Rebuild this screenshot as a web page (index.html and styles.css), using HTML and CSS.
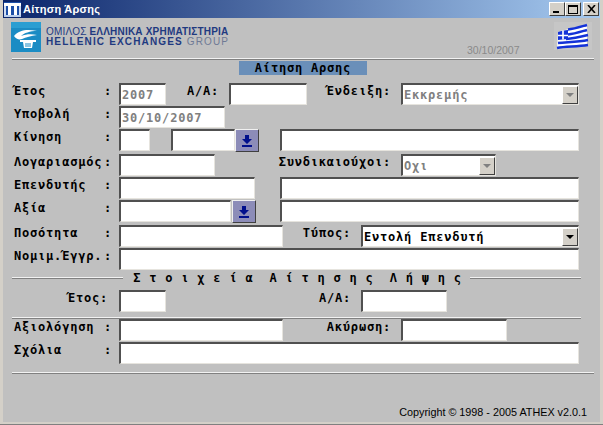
FILE: index.html
```html
<!DOCTYPE html>
<html lang="el">
<head>
  <meta charset="UTF-8">
  <title>Αίτηση Άρσης</title>
  <link rel="stylesheet" href="styles.css">
</head>
<body>
<div class="window">
  <div class="titlebar">
    <svg class="app-icon" width="17" height="15" viewBox="0 0 17 15">
      <rect width="17" height="15" fill="#1c4fa8"/>
      <rect x="0" y="1" width="17" height="3" fill="#fff"/>
      <rect x="0" y="4" width="2" height="9" fill="#cfdcf2"/>
      <rect x="4" y="4" width="3" height="9" fill="#fff"/>
      <rect x="10" y="4" width="3" height="9" fill="#fff"/>
      <rect x="15" y="4" width="2" height="9" fill="#cfdcf2"/>
      <rect x="0" y="13" width="17" height="2" fill="#bcd0ee"/>
    </svg>
    <span class="title-text">Αίτηση Άρσης</span>
    <div class="win-btns">
      <span class="win-btn"><i class="ico-min"></i></span>
      <span class="win-btn"><i class="ico-max"></i></span>
      <span class="win-btn btn-close">
        <svg width="9" height="8" viewBox="0 0 9 8"><path d="M1 0 L8 8 M8 0 L1 8" stroke="#000" stroke-width="1.6"/></svg>
      </span>
    </div>
  </div>

  <div class="content">
    <!-- header -->
    <div class="header">
      <svg class="logo" width="30" height="30" viewBox="0 0 30 30">
        <rect width="30" height="30" fill="#1b8cc4"/>
        <rect width="30" height="6" fill="#2a9ed2"/>
        <path d="M3 14 C8 8 16 7 26 9 C19 9 13 11 10 14 C15 12 21 12 26 13 C20 14 15 15 11 17 C8 18 5 17 3 14 Z" fill="#fff"/>
        <path d="M9 18 H25 V20 H22 L21 26 H13 L12 20 H9 Z" fill="#fff"/>
        <path d="M15 21 V25 M17 21 V25 M19 21 V25" stroke="#1b8cc4"/>
      </svg>
      <div class="logo-text">
        <div class="logo-line1">ΟΜΙΛΟΣ <b>ΕΛΛΗΝΙΚΑ ΧΡΗΜΑΤΙΣΤΗΡΙΑ</b></div>
        <div class="logo-line2"><b>HELLENIC EXCHANGES</b> GROUP</div>
      </div>
      <span class="today">30/10/2007</span>
      <svg class="flag" width="38" height="28" viewBox="0 0 38 28">
        <rect width="38" height="28" fill="#c6c6c6"/>
        <path d="M4 10 C12 7 20 7 33 2 V22 C22 26 12 24 3 27 Z" fill="#fff"/>
        <g stroke="#1432d8" stroke-width="2.4" fill="none">
          <path d="M14 7.5 C20 7 26 5 33 3"/>
          <path d="M14 12.5 C20 12 26 10 33 8"/>
          <path d="M12 17 C20 16.500 26 15 34 13"/>
          <path d="M4 21 C14 20 24 20 34 18"/>
          <path d="M3 26 C12 24 22 25 34 23"/>
        </g>
        <path d="M4 10 C7 9 11 8 14 8 V17 C10 17 7 18 4 18 Z" fill="#1432d8"/>
        <path d="M9 8.500 V17.500 M4 13.500 H14" stroke="#fff" stroke-width="1.6"/>
      </svg>
    </div>
    <hr class="rule">
    <div class="form-title">Αίτηση Αρσης</div>

    <!-- main form -->
    <div class="form">
      <div class="row">
        <div class="lbl"><span>Έτος</span><span class="colon">:</span></div>
        <input class="field w-47" value="2007" disabled>
        <span class="cap w-63">Α/Α:</span>
        <input class="field w-78">
        <span class="cap w-94">Ένδειξη:</span>
        <div class="combo w-178 off"><span class="combo-val">Εκκρεμής</span><span class="arrow"></span></div>
      </div>
      <div class="row">
        <div class="lbl"><span>Υποβολή</span><span class="colon">:</span></div>
        <input class="field w-106" value="30/10/2007" disabled>
      </div>
      <div class="row row-tall">
        <div class="lbl"><span>Κίνηση</span><span class="colon">:</span></div>
        <input class="field w-31">
        <input class="field w-64 ml-21">
        <button class="lov"><svg width="10" height="12" viewBox="0 0 10 12"><path d="M3 0 H7 V4 H10 L5 9 L0 4 H3 Z M0 10 H10 V12 H0 Z" fill="#000f8c"/></svg></button>
        <input class="field w-299 ml-21">
      </div>
      <div class="row">
        <div class="lbl"><span>Λογαριασμός</span><span class="colon">:</span></div>
        <input class="field w-96">
        <span class="cap w-186">Συνδικαιούχοι:</span>
        <div class="combo w-95 off"><span class="combo-val">Οχι</span><span class="arrow"></span></div>
      </div>
      <div class="row">
        <div class="lbl"><span>Επενδυτής</span><span class="colon">:</span></div>
        <input class="field w-136">
        <input class="field w-299 ml-25">
      </div>
      <div class="row row-tall">
        <div class="lbl"><span>Αξία</span><span class="colon">:</span></div>
        <input class="field w-112">
        <button class="lov ml-1"><svg width="10" height="12" viewBox="0 0 10 12"><path d="M3 0 H7 V4 H10 L5 9 L0 4 H3 Z M0 10 H10 V12 H0 Z" fill="#000f8c"/></svg></button>
        <input class="field w-299 ml-24">
      </div>
      <div class="row">
        <div class="lbl"><span>Ποσότητα</span><span class="colon">:</span></div>
        <input class="field w-164">
        <span class="cap w-78">Τύπος:</span>
        <div class="combo w-218"><span class="combo-val">Εντολή Επενδυτή</span><span class="arrow"></span></div>
      </div>
      <div class="row">
        <div class="lbl"><span>Νομιμ.Έγγρ.</span><span class="colon">:</span></div>
        <input class="field w-460">
      </div>
    </div>

    <div class="section-head">
      <span class="section-line"></span>
      <span class="section-text">Στοιχεία Αίτησης Λήψης</span>
      <span class="section-line"></span>
    </div>

    <div class="form sub-a">
      <div class="row">
        <div class="lbl lbl-end">Έτος:</div>
        <input class="field w-47">
        <span class="cap w-195">Α/Α:</span>
        <input class="field w-86">
      </div>
    </div>
    <hr class="rule rule-short">
    <div class="form">
      <div class="row">
        <div class="lbl"><span>Αξιολόγηση</span><span class="colon">:</span></div>
        <input class="field w-164">
        <span class="cap w-118">Ακύρωση:</span>
        <input class="field w-106">
      </div>
      <div class="row">
        <div class="lbl"><span>Σχόλια</span><span class="colon">:</span></div>
        <input class="field w-460">
      </div>
    </div>
    <hr class="rule rule-end">
    <div class="copyright">Copyright © 1998 - 2005 ATHEX v2.0.1</div>
  </div>
</div>
</body>
</html>
```

FILE: styles.css
```css
* {
  margin: 0;
  padding: 0;
  box-sizing: border-box;
}

body {
  width: 603px;
  height: 425px;
  overflow: hidden;
  background: #c0c0c0;
}

.window {
  width: 603px;
  height: 425px;
  display: flex;
  flex-direction: column;
  background: #d4d0c8;
  padding: 0 3px 2px;
  border-bottom: 1px solid #808080;
  font-family: "DejaVu Sans Mono", "Liberation Mono", monospace;
  font-size: 12px;
  font-weight: bold;
}

/* title bar */
.titlebar {
  height: 18px;
  flex: none;
  display: flex;
  align-items: center;
  background: linear-gradient(to right, #0a246a, #a6caf0);
  padding-left: 1px;
  padding-right: 1px;
}

.app-icon {
  flex: none;
}

.title-text {
  margin-left: 2px;
  color: #fff;
  font-family: "Liberation Sans", Arial, sans-serif;
  font-size: 11px;
  font-weight: bold;
  letter-spacing: 0.25px;
}

.win-btns {
  margin-left: auto;
  display: flex;
}

.win-btn {
  width: 16px;
  height: 14px;
  display: flex;
  align-items: center;
  justify-content: center;
  background: #d4d0c8;
  border: 1px solid;
  border-color: #fff #404040 #404040 #fff;
}

.btn-close {
  margin-left: 2px;
}

.ico-min {
  width: 6px;
  height: 2px;
  background: #000;
  margin-top: 6px;
  margin-left: -2px;
}

.ico-max {
  width: 10px;
  height: 9px;
  border: 1px solid #000;
  border-top-width: 2px;
}

/* content area */
.content {
  flex: 1;
  display: flex;
  flex-direction: column;
  background: #c0c0c0;
}

.header {
  height: 40px;
  display: flex;
  align-items: flex-start;
  padding: 4px 0 0 8px;
  flex: none;
}

.logo {
  flex: none;
}

.logo-text {
  margin-left: 5px;
  margin-top: 5px;
  color: #1f3a80;
  font-family: "Liberation Sans", Arial, sans-serif;
  font-size: 10px;
  font-weight: normal;
  line-height: 10px;
  white-space: nowrap;
}

.logo-line1 {
  letter-spacing: 0.2px;
}

.logo-line2 {
  letter-spacing: 1.15px;
  color: #6f7a95;
}

.logo-line2 b {
  color: #1f3a80;
}

.today {
  position: absolute;
  left: 467px;
  top: 44px;
  color: #8a8a8a;
  font-family: "Liberation Sans", Arial, sans-serif;
  font-size: 10.5px;
  font-weight: normal;
}

.flag {
  margin-left: auto;
  margin-right: 8px;
  flex: none;
}

.rule {
  flex: none;
  height: 2px;
  margin-left: 9px;
  width: 582px;
  border: none;
  border-top: 1px solid #f2f2f2;
  border-bottom: 1px solid #808080;
}

.form-title {
  flex: none;
  width: 128px;
  height: 14px;
  margin: 1px 0 0 236px;
  background: #6a8fb9;
  color: #000;
  line-height: 14px;
  text-align: center;
  letter-spacing: 0.8px;
  font-size: 12px;
}

.form {
  flex: none;
  margin-top: 8px;
  padding-left: 11px;
}

.row {
  height: 23px;
  display: flex;
  color: #000;
}

.row-tall {
  height: 25px;
}

.lbl {
  width: 105px;
  height: 22px;
  display: flex;
  line-height: 16px;
  letter-spacing: 0.8px;
  white-space: nowrap;
}

.colon {
  margin-left: auto;
  width: 15px;
}

.lbl-end {
  justify-content: flex-end;
  padding-right: 11px;
}

.cap {
  height: 22px;
  padding-right: 10px;
  line-height: 16px;
  text-align: right;
  letter-spacing: 0.8px;
  white-space: nowrap;
}

.field,
.combo {
  height: 22px;
  background: #fff;
  border: 1px solid;
  border-color: #505050 #e6e4de #e6e4de #505050;
  border-top-width: 2px;
  border-left-width: 2px;
  font-family: inherit;
  font-size: 12px;
  font-weight: bold;
  letter-spacing: 0.8px;
  color: #000;
  padding: 0 1px;
  outline: none;
}

.field:disabled {
  color: #808080;
  opacity: 1;
  background: #fff;
}

.combo {
  display: flex;
  align-items: center;
  justify-content: space-between;
}

.combo-val {
  white-space: nowrap;
}

.off .combo-val {
  color: #808080;
}

.arrow {
  width: 16px;
  height: 18px;
  flex: none;
  position: relative;
  margin-right: -1px;
  background: #d4d0c8;
  border: 1px solid;
  border-color: #fff #404040 #404040 #fff;
}

.arrow::after {
  content: "";
  position: absolute;
  left: 3px;
  top: 6px;
  border: 4px solid transparent;
  border-bottom: none;
  border-top: 4px solid #000;
}

.off .arrow::after {
  border-top-color: #808080;
}

.lov {
  width: 24px;
  height: 23px;
  display: flex;
  align-items: center;
  justify-content: center;
  background: #8c8cb8;
  border: 1px solid;
  border-color: #f0f0f0 #404040 #404040 #f0f0f0;
}

/* field and caption widths */
.w-31 { width: 31px; }
.w-47 { width: 47px; }
.w-63 { width: 63px; }
.w-64 { width: 64px; }
.w-78 { width: 78px; }
.w-86 { width: 86px; }
.w-94 { width: 94px; }
.w-95 { width: 95px; }
.w-96 { width: 96px; }
.w-106 { width: 106px; }
.w-112 { width: 112px; }
.w-118 { width: 118px; }
.w-136 { width: 136px; }
.w-164 { width: 164px; }
.w-178 { width: 178px; }
.w-186 { width: 186px; }
.w-195 { width: 195px; }
.w-218 { width: 218px; }
.w-299 { width: 299px; }
.w-460 { width: 460px; }

.ml-1 { margin-left: 1px; }
.ml-21 { margin-left: 21px; }
.ml-24 { margin-left: 24px; }
.ml-25 { margin-left: 25px; }

/* section heading */
.section-head {
  flex: none;
  display: flex;
  align-items: center;
  height: 14px;
  padding-left: 9px;
  width: 578px;
}

.section-line {
  flex: 1;
  height: 2px;
  border-top: 1px solid #f2f2f2;
  border-bottom: 1px solid #808080;
}

.section-text {
  margin-left: 10px;
  letter-spacing: 8.8px;
  word-spacing: -8px;
  white-space: nowrap;
}

.sub-a {
  margin-top: 5px;
}

.rule-short {
  width: 569px;
  margin-top: 4px;
}

.rule-short + .form {
  margin-top: 0;
}

.rule-end {
  margin-top: 7px;
}

.copyright {
  margin-top: auto;
  margin-bottom: 4px;
  text-align: right;
  padding-right: 13px;
  color: #000;
  font-family: "Liberation Sans", Arial, sans-serif;
  font-size: 10.8px;
  font-weight: normal;
}
```
